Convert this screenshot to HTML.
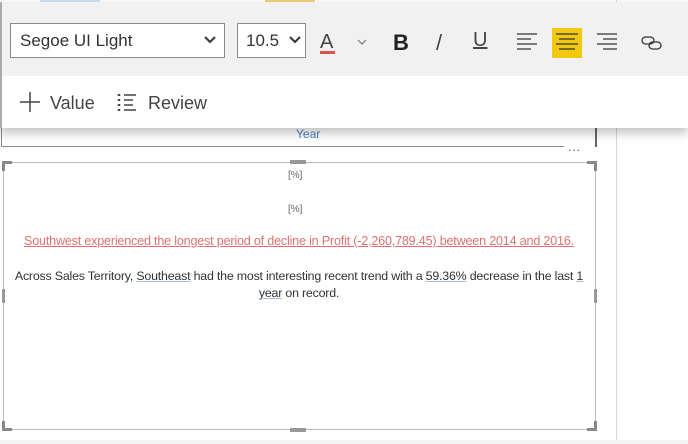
<!DOCTYPE html>
<html><head><style>
*{margin:0;padding:0;box-sizing:border-box}
body{width:688px;height:444px;overflow:hidden;background:#fff;position:relative;font-family:"Liberation Sans",sans-serif}
.abs{position:absolute}
u{text-decoration-color:#9cc0ea}
</style></head><body>
<div class="abs" style="left:40px;top:0;width:60px;height:3px;background:#cfe0f3"></div>
<div class="abs" style="left:265px;top:0;width:50px;height:3px;background:#f2d27a"></div>
<div class="abs" style="left:616px;top:0;width:1px;height:444px;background:#d8d8d8"></div>
<div class="abs" style="left:0;top:440px;width:688px;height:4px;background:#f4f4f4"></div>
<div class="abs" style="left:1px;top:120px;width:1px;height:27px;background:#8a8a8a"></div>
<div class="abs" style="left:1px;top:146px;width:563px;height:1px;background:#8a8a8a"></div>
<div class="abs" style="left:568px;top:140px;font-size:12px;color:#555;letter-spacing:1px">...</div>
<div class="abs" style="left:595px;top:120px;width:2px;height:27px;background:#666"></div>
<div class="abs" style="left:296px;top:127px;font-size:12px;color:#4a7cc0">Year</div>
<div class="abs" style="left:0;top:2px;width:688px;height:126px;background:#fff;border-left:2px solid #aaa;box-shadow:0 5px 10px rgba(0,0,0,.25)">
 <div style="height:74px;background:#f1f1f1"></div>
</div>
<div class="abs" style="left:10px;top:23px;width:215px;height:35px;border:1px solid #8a8a8a;background:#fff;font-size:17px;color:#333;padding:7px 0 0 9px">Segoe UI Light</div>
<svg class="abs" style="left:204px;top:36px" width="12" height="8"><path d="M1 1l5 5 5-5" stroke="#333" stroke-width="2" fill="none"/></svg>
<div class="abs" style="left:237px;top:23px;width:69px;height:35px;border:1px solid #8a8a8a;background:#fff;font-size:17px;color:#333;padding:7px 0 0 8px">10.5</div>
<svg class="abs" style="left:289px;top:36px" width="12" height="8"><path d="M1 1l5 5 5-5" stroke="#333" stroke-width="2" fill="none"/></svg>
<div class="abs" style="left:320px;top:31px;font-size:20px;color:#444">A</div>
<div class="abs" style="left:320px;top:51px;width:15px;height:3px;background:#d9534f"></div>
<svg class="abs" style="left:357px;top:39px" width="10" height="7"><path d="M1 1l4 4 4-4" stroke="#777" stroke-width="1.2" fill="none"/></svg>
<div class="abs" style="left:393px;top:30px;font-size:22px;font-weight:bold;color:#222">B</div>
<div class="abs" style="left:436px;top:30px;font-size:22px;color:#444">/</div>
<div class="abs" style="left:473px;top:29px;font-size:20px;color:#444;text-decoration:underline">U</div>
<svg class="abs" style="left:517px;top:33px" width="22" height="18"><path d="M0 1h20M0 6h14M0 11h20M0 16h14" stroke="#333" stroke-width="1.3"/></svg>
<div class="abs" style="left:552px;top:28px;width:30px;height:30px;background:#f2c811"></div>
<svg class="abs" style="left:556px;top:33px" width="22" height="18"><path d="M0 1h22M3 6h16M0 11h22M3 16h16" stroke="#333" stroke-width="1.3"/></svg>
<svg class="abs" style="left:596px;top:33px" width="22" height="18"><path d="M1 1h20M7 6h14M1 11h20M7 16h14" stroke="#333" stroke-width="1.3"/></svg>
<svg class="abs" style="left:641px;top:36px" width="22" height="14"><rect x="1" y="1" width="12" height="7" rx="3.5" stroke="#333" stroke-width="1.3" fill="none"/><rect x="8" y="6" width="12" height="7" rx="3.5" stroke="#333" stroke-width="1.3" fill="none"/></svg>
<svg class="abs" style="left:20px;top:92px" width="20" height="20"><path d="M10 0v20M0 10h20" stroke="#444" stroke-width="1.5"/></svg>
<div class="abs" style="left:50px;top:93px;font-size:18px;color:#444">Value</div>
<svg class="abs" style="left:117px;top:93px" width="20" height="18"><path d="M2 1v2M2 6v2M2 11v2M2 16v2" stroke="#444" stroke-width="2.5"/><path d="M7 2h12M7 7h9M7 12h9M7 17h12" stroke="#444" stroke-width="1.5"/></svg>
<div class="abs" style="left:148px;top:93px;font-size:18px;color:#444">Review</div>
<div class="abs" style="left:3px;top:162px;width:593px;height:268px;border:1px solid #b8b8b8"></div>
<div class="abs" style="left:2px;top:161px;width:10px;height:3px;background:#888"></div>
<div class="abs" style="left:2px;top:161px;width:3px;height:10px;background:#888"></div>
<div class="abs" style="left:587px;top:161px;width:10px;height:3px;background:#888"></div>
<div class="abs" style="left:594px;top:161px;width:3px;height:10px;background:#888"></div>
<div class="abs" style="left:2px;top:428px;width:10px;height:3px;background:#888"></div>
<div class="abs" style="left:2px;top:421px;width:3px;height:10px;background:#888"></div>
<div class="abs" style="left:587px;top:428px;width:10px;height:3px;background:#888"></div>
<div class="abs" style="left:594px;top:421px;width:3px;height:10px;background:#888"></div>
<div class="abs" style="left:290px;top:160px;width:16px;height:4px;background:#999"></div>
<div class="abs" style="left:290px;top:428px;width:16px;height:4px;background:#999"></div>
<div class="abs" style="left:2px;top:289px;width:3px;height:14px;background:#999"></div>
<div class="abs" style="left:594px;top:289px;width:3px;height:14px;background:#999"></div>
<div class="abs" style="left:288px;top:170px;font-size:10px;color:#666">[%]</div>
<div class="abs" style="left:288px;top:204px;font-size:10px;color:#666">[%]</div>
<div class="abs" style="left:0;top:234px;width:598px;text-align:center;font-size:12.6px;color:#e07070;text-decoration:underline;letter-spacing:-0.2px">Southwest experienced the longest period of decline in Profit (-2,260,789.45) between 2014 and 2016.</div>
<div class="abs" style="left:0;top:268px;width:598px;text-align:center;font-size:12.4px;line-height:17px;color:#333;letter-spacing:-0.2px">Across Sales Territory, <u>Southeast</u> had the most interesting recent trend with a <u>59.36%</u> decrease in the last <u>1</u><br><u>year</u> on record.</div>
</body></html>
